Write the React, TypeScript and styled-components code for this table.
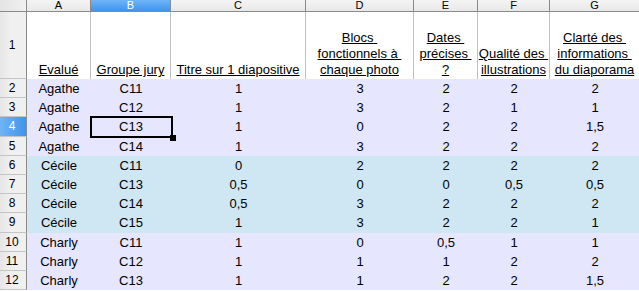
import React from 'react'
import styled, { createGlobalStyle } from 'styled-components'

const GlobalStyle = createGlobalStyle`
  html, body {
    margin: 0;
    padding: 0;
    background: #ffffff;
    overflow: hidden;
  }
`

type Row = [string, string, string, string, string, string, string]

const LAVENDER = '#e6e6ff'
const SKY = '#cfe6f3'

const columns = ['A', 'B', 'C', 'D', 'E', 'F', 'G']

const titles: string[][] = [
  ['Evalué'],
  ['Groupe jury'],
  ['Titre sur 1 diapositive'],
  ['Blocs\u00a0', 'fonctionnels à\u00a0', 'chaque photo'],
  ['Dates\u00a0', 'précises\u00a0', '?'],
  ['Qualité des\u00a0', 'illustrations'],
  ['Clarté des\u00a0', 'informations\u00a0', 'du diaporama'],
]

const rows: Row[] = [
  ['Agathe', 'C11', '1', '3', '2', '2', '2'],
  ['Agathe', 'C12', '1', '3', '2', '1', '1'],
  ['Agathe', 'C13', '1', '0', '2', '2', '1,5'],
  ['Agathe', 'C14', '1', '3', '2', '2', '2'],
  ['Cécile', 'C11', '0', '2', '2', '2', '2'],
  ['Cécile', 'C13', '0,5', '0', '0', '0,5', '0,5'],
  ['Cécile', 'C14', '0,5', '3', '2', '2', '2'],
  ['Cécile', 'C15', '1', '3', '2', '2', '1'],
  ['Charly', 'C11', '1', '0', '0,5', '1', '1'],
  ['Charly', 'C12', '1', '1', '1', '2', '2'],
  ['Charly', 'C13', '1', '1', '2', '2', '1,5'],
]

const App: React.FC = () => {
  return (
    <>
      <GlobalStyle />
      <Sheet>
        <Corner />
        {columns.map(c => (
          <ColHead key={c} $active={c === 'B'}>{c}</ColHead>
        ))}

        <RowHead>1</RowHead>
        {titles.map((lines, i) => (
          <TitleCell key={i}>
            <TitleText>
              {lines.map((l, j) => (
                <React.Fragment key={j}>
                  {j > 0 && <br />}
                  {l}
                </React.Fragment>
              ))}
            </TitleText>
          </TitleCell>
        ))}

        {rows.map((row, r) => {
          const bg = row[0] === 'Cécile' ? SKY : LAVENDER
          const rowNum = r + 2
          return (
            <React.Fragment key={r}>
              <RowHead $active={rowNum === 4}>{rowNum}</RowHead>
              {row.map((v, c) => (
                <Cell key={c} $bg={bg}>
                  {v}
                  {rowNum === 4 && c === 1 && (
                    <Selection>
                      <Handle />
                    </Selection>
                  )}
                </Cell>
              ))}
            </React.Fragment>
          )
        })}
      </Sheet>
    </>
  )
}

const Sheet = styled.div`
  display: grid;
  grid-template-columns: 27px 64px 80px 135px 108px 64px 72px 90px;
  grid-template-rows: 12px 67px repeat(11, 19.2px);
  width: 640px;
  font-family: "Liberation Sans", Arial, sans-serif;
  color: #000000;
`

const Corner = styled.div`
  background: linear-gradient(to right, #e4e4e4, #f0f0f0);
  border-right: 1px solid #8a8a8a;
  border-bottom: 1px solid #8a8a8a;
  box-sizing: border-box;
`

const ColHead = styled.div<{ $active?: boolean }>`
  box-sizing: border-box;
  display: flex;
  align-items: center;
  justify-content: center;
  font-size: 11px;
  line-height: 1;
  overflow: hidden;
  padding-bottom: 1px;
  color: ${p => (p.$active ? '#ffffff' : '#000000')};
  background: ${p =>
    p.$active
      ? 'linear-gradient(to bottom, #6fb5f7, #3f94ec)'
      : 'linear-gradient(to bottom, #f4f4f4, #e8e8e8)'};
  border-right: 1px solid #8a8a8a;
  border-bottom: 1px solid #8a8a8a;
`

const RowHead = styled.div<{ $active?: boolean }>`
  box-sizing: border-box;
  display: flex;
  align-items: center;
  justify-content: center;
  font-size: 12px;
  padding-right: 2px;
  color: ${p => (p.$active ? '#ffffff' : '#000000')};
  background: ${p =>
    p.$active
      ? 'linear-gradient(to right, #6fb5f7, #3f94ec)'
      : 'linear-gradient(to right, #e6e6e6, #f0f0f0 40%, #f0f0f0)'};
  border-right: 1px solid #8a8a8a;
  border-bottom: 1px solid #c4c4c4;
`

const TitleCell = styled.div`
  box-sizing: border-box;
  display: flex;
  align-items: flex-end;
  justify-content: center;
  background: #ffffff;
  border-right: 1px solid #c0c0c0;
  padding-bottom: 1px;
  overflow: hidden;
`

const TitleText = styled.span`
  font-size: 13px;
  line-height: 16px;
  text-align: center;
  text-decoration: underline;
  white-space: nowrap;
`

const Cell = styled.div<{ $bg: string }>`
  position: relative;
  display: flex;
  align-items: center;
  justify-content: center;
  font-size: 13px;
  background: ${p => p.$bg};
  white-space: nowrap;
`

const Selection = styled.div`
  position: absolute;
  z-index: 2;
  left: -1px;
  right: -2px;
  top: -1px;
  bottom: -1px;
  border: 2px solid #000000;
`

const Handle = styled.div`
  position: absolute;
  right: -5px;
  bottom: -5px;
  width: 6px;
  height: 6px;
  background: #000000;
`

export default App
